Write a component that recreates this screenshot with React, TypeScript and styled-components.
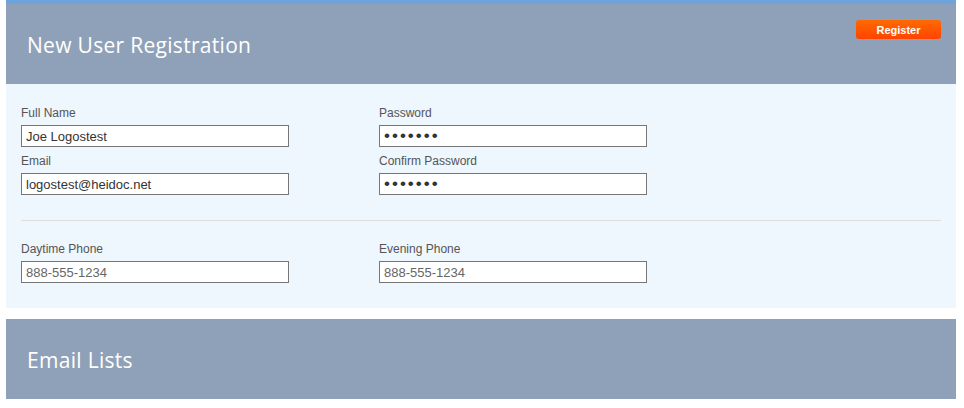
import styled, { createGlobalStyle } from "styled-components";

const GlobalStyle = createGlobalStyle`
  html, body {
    margin: 0;
    padding: 0;
    background: #ffffff;
  }
  * {
    box-sizing: border-box;
  }
`;

const fields = [
  { label: "Full Name", value: "Joe Logostest", type: "text" },
  { label: "Password", value: "1234567", type: "password" },
  { label: "Email", value: "logostest@heidoc.net", type: "text" },
  { label: "Confirm Password", value: "1234567", type: "password" },
];

const phones = [
  { label: "Daytime Phone", placeholder: "888-555-1234" },
  { label: "Evening Phone", placeholder: "888-555-1234" },
];

export default function App() {
  return (
    <Page>
      <GlobalStyle />
      <Header $accent>
        <Title>New User Registration</Title>
        <RegisterButton type="button">Register</RegisterButton>
      </Header>
      <Panel>
        <Grid>
          {fields.map((f) => (
            <Field key={f.label}>
              <Label>{f.label}</Label>
              <Input
                type={f.type}
                $password={f.type === "password"}
                defaultValue={f.value}
                readOnly
              />
            </Field>
          ))}
        </Grid>
        <Divider />
        <Grid>
          {phones.map((f) => (
            <Field key={f.label}>
              <Label>{f.label}</Label>
              <Input type="text" placeholder={f.placeholder} />
            </Field>
          ))}
        </Grid>
      </Panel>
      <Header>
        <Title>Email Lists</Title>
      </Header>
    </Page>
  );
}

const Page = styled.div`
  display: flex;
  flex-direction: column;
  width: 950px;
  margin-left: 6px;
  font-family: "Liberation Sans", Arial, sans-serif;
`;

const Header = styled.div<{ $accent?: boolean }>`
  display: flex;
  align-items: flex-start;
  justify-content: space-between;
  height: ${({ $accent }) => ($accent ? "84px" : "80px")};
  padding: 0 15px 0 21px;
  background: #8fa1b8;
  border-top: ${({ $accent }) => ($accent ? "4px solid #6fa3dc" : "none")};
`;

const Title = styled.h1`
  margin: 28px 0 0 0;
  font-family: "Open Sans", sans-serif;
  font-size: 21px;
  font-weight: 400;
  letter-spacing: 0.3px;
  line-height: 26px;
  color: #ffffff;
`;

const RegisterButton = styled.button`
  width: 85px;
  height: 19px;
  margin-top: 16px;
  padding: 0;
  border: none;
  border-radius: 3px;
  background: linear-gradient(#ff6a00, #ff4400);
  font-family: "Liberation Sans", Arial, sans-serif;
  font-size: 11px;
  font-weight: 700;
  color: #ffffff;
  cursor: pointer;
`;

const Panel = styled.div`
  display: flex;
  flex-direction: column;
  padding: 22px 15px 25px 15px;
  margin-bottom: 11px;
  background: #eef6fe;
`;

const Grid = styled.div`
  display: grid;
  grid-template-columns: 268px 268px;
  column-gap: 90px;
  row-gap: 7px;
`;

const Field = styled.div`
  display: flex;
  flex-direction: column;
`;

const Label = styled.label`
  font-size: 12px;
  line-height: 14px;
  color: #555555;
  margin-bottom: 5px;
`;

const Input = styled.input<{ $password?: boolean }>`
  width: 268px;
  height: 22px;
  padding: 0 4px;
  border: 1px solid #777777;
  background: #ffffff;
  font-family: "Liberation Sans", Arial, sans-serif;
  font-size: ${({ $password }) => ($password ? "17px" : "13px")};
  letter-spacing: ${({ $password }) => ($password ? "2px" : "normal")};
  color: #333333;
  outline: none;

  &::placeholder {
    color: #666666;
  }
`;

const Divider = styled.hr`
  width: 100%;
  margin: 25px 0 21px 0;
  border: none;
  border-top: 1px solid #dddddd;
`;
